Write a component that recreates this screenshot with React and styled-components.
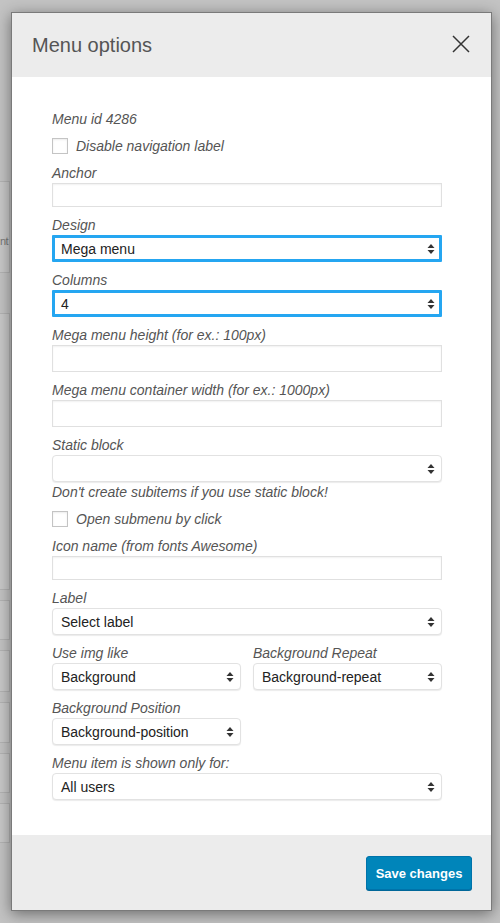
import React from "react";
import styled, { createGlobalStyle } from "styled-components";

const Global = createGlobalStyle`
  html, body { margin: 0; padding: 0; }
  body {
    background: #c2c2c2;
    font-family: "Liberation Sans", Arial, Helvetica, sans-serif;
    width: 500px;
    height: 923px;
    overflow: hidden;
  }
`;

const Page = styled.div`
  position: relative;
  width: 500px;
  height: 923px;
  background: #c3c3c3;
`;

const BgColumn = styled.div`
  display: flex;
  flex-direction: column;
  width: 10px;
  padding-top: 181px;
`;

const BgBox = styled.div`
  height: ${p => p.$h}px;
  box-sizing: border-box;
  margin-top: ${p => p.$mt || 0}px;
  padding-top: ${p => p.$pt || 0}px;
  border-top: 1px solid #b3b3b3;
  border-bottom: 1px solid #b3b3b3;
  border-right: 1px solid #b3b3b3;
  background: #c8c8c8;
  font-size: 11px;
  line-height: 14px;
  letter-spacing: -0.5px;
  color: #777;
  white-space: nowrap;
`;

const Overlay = styled.div`
  position: absolute;
  inset: 0;
  padding: 12px 8px 12px 11px;
`;

const Modal = styled.div`
  width: 479px;
  height: 897px;
  border: 1px solid #7a7a7a;
  background: #fff;
  box-shadow: 0 3px 14px rgba(0, 0, 0, 0.45);
  display: flex;
  flex-direction: column;
`;

const Header = styled.div`
  height: 64px;
  flex: none;
  background: #ececec;
  display: flex;
  align-items: center;
  justify-content: space-between;
  padding: 0 20px 0 20px;
`;

const Title = styled.h2`
  margin: 0;
  font-size: 20px;
  font-weight: 400;
  color: #555;
  line-height: 24px;
  padding-bottom: 1px;
`;

const CloseBtn = styled.button`
  border: 0;
  background: transparent;
  padding: 0;
  width: 20px;
  height: 20px;
  display: flex;
  align-items: center;
  justify-content: center;
  cursor: pointer;
  margin-top: -2px;
`;

const Body = styled.div`
  flex: 1;
  padding: 33px 49px 35px 40px;
  display: flex;
  flex-direction: column;
  gap: 9px;
`;

const Text = styled.div`
  font-size: 14px;
  line-height: 18px;
  font-style: italic;
  color: #555;
`;

const Field = styled.div`
  display: flex;
  flex-direction: column;
  gap: 1px;
`;

const CheckRow = styled.label`
  display: flex;
  align-items: center;
  height: 18px;
  gap: 8px;
`;

const Check = styled.span`
  width: 16px;
  height: 16px;
  box-sizing: border-box;
  border: 1px solid #c4c4c4;
  background: #fff;
  box-shadow: inset 0 1px 2px rgba(0, 0, 0, 0.08);
  flex: none;
`;

const Input = styled.div`
  height: ${p => p.$h}px;
  box-sizing: border-box;
  border: 1px solid #e0e0e0;
  box-shadow: inset 0 1px 2px rgba(0, 0, 0, 0.06);
  background: #fff;
`;

const SelectBox = styled.div`
  height: 27px;
  box-sizing: border-box;
  border: ${p => (p.$focus ? "3px solid #25a6f1" : "1px solid #e2e2e2")};
  border-radius: ${p => (p.$focus ? "1px" : "4px")};
  box-shadow: ${p => (p.$focus ? "none" : "0 1px 1px rgba(0,0,0,0.08)")};
  background: #fff;
  display: flex;
  align-items: center;
  justify-content: space-between;
  padding: 0 ${p => (p.$focus ? 4 : 6)}px 0 ${p => (p.$focus ? 6 : 8)}px;
  font-size: 14px;
  color: #222;
`;

const Row = styled.div`
  display: grid;
  grid-template-columns: 1fr 1fr;
  column-gap: 12px;
`;

const Footer = styled.div`
  height: 75px;
  flex: none;
  background: #ececec;
  display: flex;
  justify-content: flex-end;
  align-items: flex-start;
  padding: 21px 19px 0 0;
  box-sizing: border-box;
`;

const SaveButton = styled.button`
  height: 34px;
  width: 106px;
  border: 1px solid #0073aa;
  border-radius: 3px;
  background: #0085ba;
  box-shadow: 0 1px 0 #006799;
  color: #fff;
  font-family: "Liberation Sans", Arial, sans-serif;
  font-weight: 700;
  font-size: 13px;
  padding: 0;
  cursor: pointer;
`;

const Arrows = () => (
  <svg width="8" height="12" viewBox="0 0 8 12">
    <path d="M4 1 L7.5 5 H0.5 Z" fill="#333" />
    <path d="M4 11 L7.5 7 H0.5 Z" fill="#333" />
  </svg>
);

const Select = ({ value, focus }) => (
  <SelectBox $focus={focus}>
    <span>{value}</span>
    <Arrows />
  </SelectBox>
);

export default function App() {
  return (
    <Page>
      <Global />
      <BgColumn>
        <BgBox $h={92} $pt={52}>nt</BgBox>
        <BgBox $h={277} $mt={40} />
        <BgBox $h={40} $mt={10} />
        <BgBox $h={42} $mt={10} />
        <BgBox $h={41} $mt={10} />
        <BgBox $h={40} $mt={10} />
        <BgBox $h={40} $mt={10} />
      </BgColumn>
      <Overlay>
        <Modal>
          <Header>
            <Title>Menu options</Title>
            <CloseBtn aria-label="Close">
              <svg width="18" height="18" viewBox="0 0 18 18">
                <path d="M1 1 L17 17 M17 1 L1 17" stroke="#333" strokeWidth="1.5" fill="none" />
              </svg>
            </CloseBtn>
          </Header>
          <Body>
            <Text>Menu id 4286</Text>
            <CheckRow>
              <Check />
              <Text>Disable navigation label</Text>
            </CheckRow>
            <Field>
              <Text>Anchor</Text>
              <Input $h={24} />
            </Field>
            <Field>
              <Text>Design</Text>
              <Select value="Mega menu" focus />
            </Field>
            <Field>
              <Text>Columns</Text>
              <Select value="4" focus />
            </Field>
            <Field>
              <Text>Mega menu height (for ex.: 100px)</Text>
              <Input $h={27} />
            </Field>
            <Field>
              <Text>Mega menu container width (for ex.: 1000px)</Text>
              <Input $h={27} />
            </Field>
            <Field>
              <Text>Static block</Text>
              <Select value="" />
              <Text>Don't create subitems if you use static block!</Text>
            </Field>
            <CheckRow>
              <Check />
              <Text>Open submenu by click</Text>
            </CheckRow>
            <Field>
              <Text>Icon name (from fonts Awesome)</Text>
              <Input $h={24} />
            </Field>
            <Field>
              <Text>Label</Text>
              <Select value="Select label" />
            </Field>
            <Row>
              <Field>
                <Text>Use img like</Text>
                <Select value="Background" />
              </Field>
              <Field>
                <Text>Background Repeat</Text>
                <Select value="Background-repeat" />
              </Field>
            </Row>
            <Row>
              <Field>
                <Text>Background Position</Text>
                <Select value="Background-position" />
              </Field>
            </Row>
            <Field>
              <Text>Menu item is shown only for:</Text>
              <Select value="All users" />
            </Field>
          </Body>
          <Footer>
            <SaveButton>Save changes</SaveButton>
          </Footer>
        </Modal>
      </Overlay>
    </Page>
  );
}
